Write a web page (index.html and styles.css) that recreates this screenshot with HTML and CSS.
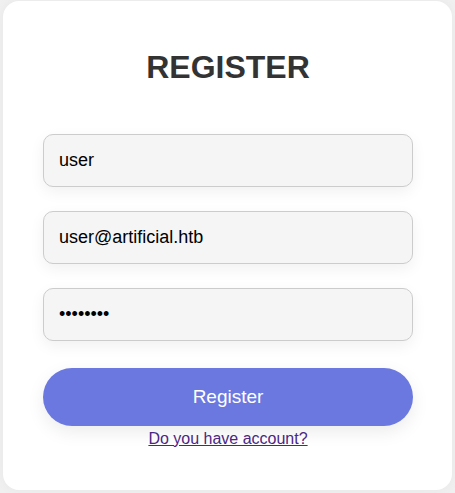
FILE: index.html
```html
<!DOCTYPE html>
<html lang="en">
<head>
  <meta charset="UTF-8">
  <meta name="viewport" content="width=device-width, initial-scale=1.0">
  <title>Register</title>
  <link rel="stylesheet" href="styles.css">
</head>
<body>
  <div class="card">
    <h1>REGISTER</h1>
    <form class="form" onsubmit="return false">
      <input type="text" value="user">
      <input type="email" value="user@artificial.htb">
      <input type="password" value="12345678">
      <button type="submit">Register</button>
    </form>
    <a class="link" href="#">Do you have account?</a>
  </div>
</body>
</html>
```

FILE: styles.css
```css
body {
  margin: 0;
  background: #f0f0f0;
  font-family: 'Liberation Sans', Arial, sans-serif;
}

.card {
  background: #ffffff;
  margin: 1px 3px 3px;
  height: 489px;
  box-sizing: border-box;
  padding: 48px 39px 0 40px;
  border-radius: 16px;
  box-shadow: 0 0 12px rgba(0, 0, 0, 0.04);
  display: flex;
  flex-direction: column;
  align-items: center;
}

h1 {
  margin: 0 0 48px;
  font-size: 32px;
  line-height: 37px;
  color: #333;
}

.form {
  width: 100%;
  display: flex;
  flex-direction: column;
  gap: 24px;
}

input {
  height: 53px;
  padding: 0 15px;
  font-family: inherit;
  font-size: 18px;
  color: #000;
  background: #f5f5f5;
  border: 1px solid #cccccc;
  border-radius: 10px;
  box-shadow: 0 5px 15px rgba(0, 0, 0, 0.06);
  box-sizing: border-box;
  outline: none;
}

button {
  margin-top: 3px;
  height: 58px;
  font-family: inherit;
  font-size: 19px;
  color: #fff;
  background: #6a78e0;
  border: none;
  border-radius: 29px;
  box-shadow: 0 6px 18px rgba(0, 0, 0, 0.08);
  cursor: pointer;
}

.link {
  margin-top: 4px;
  font-size: 16px;
  line-height: 18px;
  color: #4b2683;
}
```
